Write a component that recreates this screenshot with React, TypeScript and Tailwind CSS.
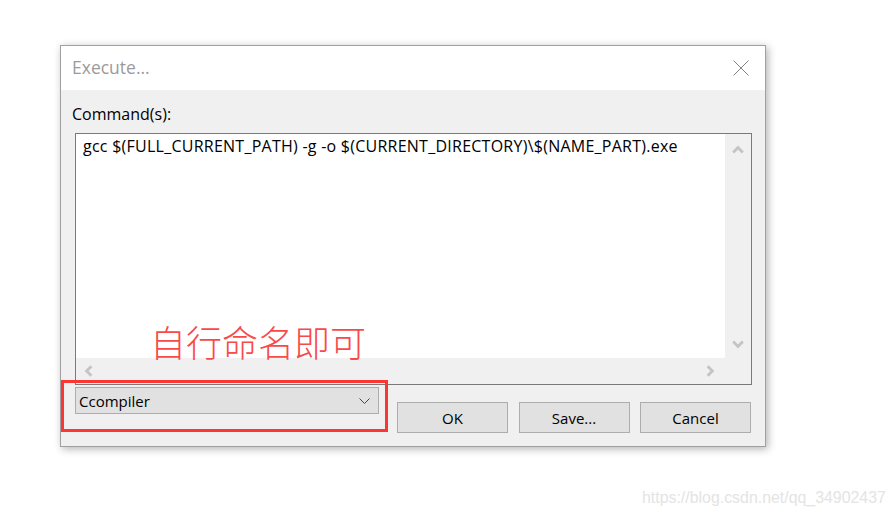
const uiFont = "font-['Open_Sans','Liberation_Sans',sans-serif]";

function Chevron({ points, className }: { points: string; className: string }) {
  return (
    <svg viewBox="0 0 10 10" className={className} fill="none" stroke="#c4c4c4" strokeWidth="2.4">
      <polyline points={points} />
    </svg>
  );
}

function Button({ label }: { label: string }) {
  return (
    <button className="h-[31px] w-[111px] border border-[#adadad] bg-[#e1e1e1] pt-[2px] text-[15px] leading-none text-black">
      {label}
    </button>
  );
}

export default function App() {
  return (
    <div className={`relative h-[516px] w-[895px] overflow-hidden bg-white pl-[60px] pt-[45px] ${uiFont}`}>
      {/* Dialog */}
      <div className="h-[402px] w-[706px] border border-[#a0a0a0] bg-[#f0f0f0] shadow-[2px_2px_8px_rgba(0,0,0,0.3)]">
        <div className="flex h-[44px] items-center justify-between bg-white pl-[11px] pr-[16px]">
          <span className="pb-[2px] text-[17.5px] text-[#9b9b9b]">Execute...</span>
          <svg viewBox="0 0 16 16" className="h-4 w-4" fill="none" stroke="#808080" strokeWidth="1">
            <path d="M0.5 0.5 15.5 15.5M15.5 0.5 0.5 15.5" />
          </svg>
        </div>

        <div className="pl-[14px] pr-[13px]">
          <div className="-ml-[3px] pt-[14px] text-[16px] leading-[20px] text-black">Command(s):</div>

          {/* Command box */}
          <div className="mt-[9px] flex h-[252px] w-[677px] flex-col border border-[#7a7a7a] bg-white">
            <div className="flex min-h-0 flex-1">
              <div className="flex-1 pl-[7px] pt-[1px] text-[16px] leading-[22px] tracking-[0.25px] text-black">
                gcc $(FULL_CURRENT_PATH) -g -o $(CURRENT_DIRECTORY)\$(NAME_PART).exe
              </div>
              <div className="flex w-[26px] flex-col items-center justify-between bg-[#f0f0f0] pb-[8px] pt-[10px]">
                <Chevron points="1,7 5,3 9,7" className="h-[12px] w-[12px]" />
                <Chevron points="1,3 5,7 9,3" className="h-[12px] w-[12px]" />
              </div>
            </div>
            <div className="flex h-[26px] items-center justify-between bg-[#f0f0f0] pl-[7px] pr-[35px]">
              <Chevron points="7,1 3,5 7,9" className="h-[12px] w-[12px]" />
              <Chevron points="3,1 7,5 3,9" className="h-[12px] w-[12px]" />
            </div>
          </div>

          <div className="flex justify-between">
            <div className="mt-[2px] flex h-[27px] w-[304px] items-center justify-between border border-[#adadad] bg-[#e1e1e1] pl-[3px] pr-[8px] text-[15px] text-black">
              <span className="pt-px">Ccompiler</span>
              <svg viewBox="0 0 11 6" className="h-[6px] w-[11px]" fill="none" stroke="#444" strokeWidth="1">
                <path d="M0.5 0.5 5.5 5.5 10.5 0.5" />
              </svg>
            </div>
            <div className="mt-[17px] flex gap-[10.5px] pr-px">
              <Button label="OK" />
              <Button label="Save..." />
              <Button label="Cancel" />
            </div>
          </div>
        </div>
      </div>

      {/* Annotations drawn over the screenshot */}
      <div className="absolute left-[61px] top-[380px] h-[52px] w-[327px] border-[3px] border-[#fc3535]" />
      <div className="absolute left-[150px] top-[321px] whitespace-nowrap font-['Noto_Sans_CJK_SC',sans-serif] text-[36px] font-light leading-[40px] text-[#f94a4a]">
        自行命名即可
      </div>
      <div className="absolute left-[642px] top-[487px] font-['Liberation_Sans',sans-serif] text-[15.9px] leading-[22px] text-[#e4e4e4]">
        https://blog.csdn.net/qq_34902437
      </div>
    </div>
  );
}
